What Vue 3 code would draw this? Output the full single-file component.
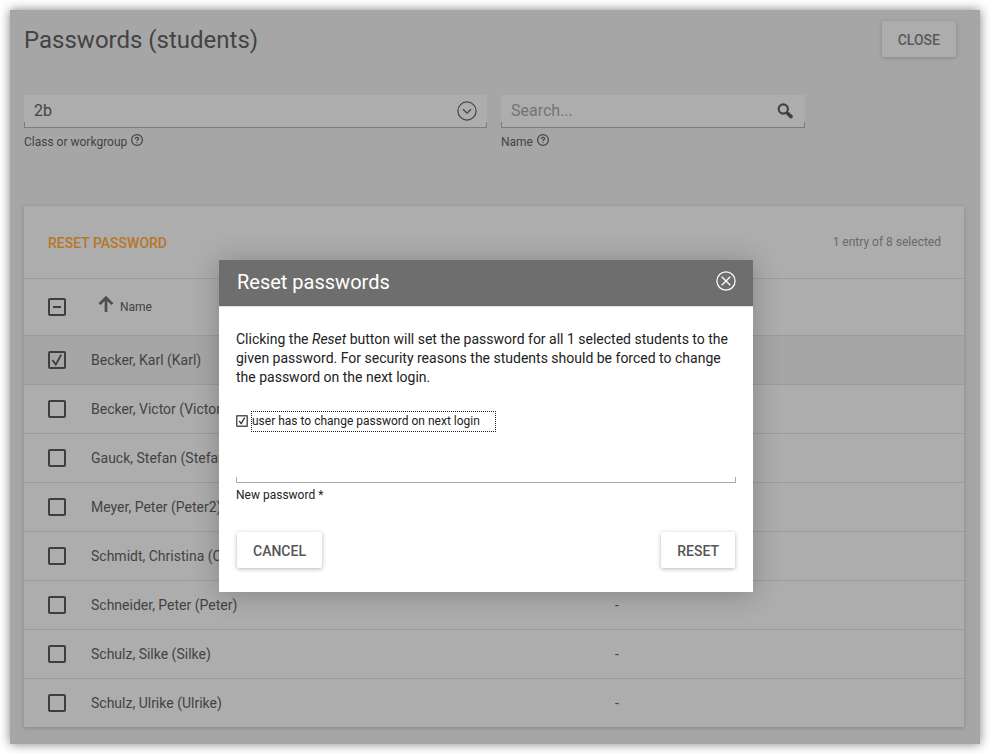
<script setup>
import { ref } from 'vue'

const students = ref([
  { name: 'Becker, Karl (Karl)', selected: true },
  { name: 'Becker, Victor (Victor)', selected: false },
  { name: 'Gauck, Stefan (Stefan)', selected: false },
  { name: 'Meyer, Peter (Peter2)', selected: false },
  { name: 'Schmidt, Christina (Christina)', selected: false },
  { name: 'Schneider, Peter (Peter)', selected: false },
  { name: 'Schulz, Silke (Silke)', selected: false },
  { name: 'Schulz, Ulrike (Ulrike)', selected: false },
])
</script>

<template>
  <div class="window">
    <header class="page-header">
      <h1>Passwords (students)</h1>
      <button class="btn close-btn">CLOSE</button>
    </header>

    <section class="filters">
      <div class="field wide">
        <div class="control">
          <span>2b</span>
          <svg class="chevron" width="20" height="20" viewBox="0 0 20 20" fill="none" stroke="#454545">
            <circle cx="10" cy="10" r="9.1" stroke-width="1.2" />
            <path d="M6 8.2l4 4 4-4" stroke-width="1.3" />
          </svg>
        </div>
        <div class="label">
          <span>Class or workgroup</span>
          <svg width="12" height="12" viewBox="0 0 12 12" fill="none" stroke="#404040">
            <circle cx="6" cy="6" r="5.4" stroke-width="1.2" />
            <path d="M4.4 4.9c0-2.1 3.2-2.1 3.2-.2 0 1.1-1.6 1.2-1.6 2.3M6 8v1.1" stroke-width="1.2" />
          </svg>
        </div>
      </div>
      <div class="field narrow">
        <div class="control">
          <span class="placeholder">Search...</span>
          <svg class="magnifier" width="16" height="16" viewBox="0 0 16 16" fill="none" stroke="#404040">
            <circle cx="6.3" cy="6" r="4.6" stroke-width="2.1" />
            <path d="M9.6 9.3l1.5 1.5" stroke-width="2" />
            <path d="M11.1 10.8l2.9 2.8" stroke-width="3.6" stroke-linecap="round" />
          </svg>
        </div>
        <div class="label">
          <span>Name</span>
          <svg width="12" height="12" viewBox="0 0 12 12" fill="none" stroke="#404040">
            <circle cx="6" cy="6" r="5.4" stroke-width="1.2" />
            <path d="M4.4 4.9c0-2.1 3.2-2.1 3.2-.2 0 1.1-1.6 1.2-1.6 2.3M6 8v1.1" stroke-width="1.2" />
          </svg>
        </div>
      </div>
    </section>

    <section class="grid">
      <div class="toolbar">
        <span class="action">RESET PASSWORD</span>
        <span class="status">1 entry of 8 selected</span>
      </div>
      <div class="grid-head">
        <svg class="check" width="18" height="18" viewBox="0 0 18 18" fill="none" stroke="#3e3e3e">
          <rect x="1" y="1" width="16" height="16" rx="1" stroke-width="2" />
          <path d="M5 9h8" stroke-width="2" />
        </svg>
        <svg class="arrow" width="16" height="17" viewBox="0 0 16 17" fill="none" stroke="#4d4d4d">
          <path d="M8 16V2M1.600 8.100L8 1.700l6.400 6.400" stroke-width="2.700" />
        </svg>
        <span>Name</span>
      </div>
      <div v-for="s in students" :key="s.name" class="row" :class="{ selected: s.selected }">
        <svg class="check" width="18" height="18" viewBox="0 0 18 18" fill="none" stroke="#3e3e3e">
          <rect x="1" y="1" width="16" height="16" rx="1" stroke-width="2" />
          <path v-if="s.selected" d="M4.400 9l3.400 4.600 5.400-10" stroke-width="1.900" />
        </svg>
        <span class="name">{{ s.name }}</span>
        <span class="mail">-</span>
      </div>
    </section>
  </div>

  <div class="dialog" role="dialog">
    <div class="dialog-title">
      <h2>Reset passwords</h2>
      <svg width="20" height="20" viewBox="0 0 20 20" fill="none" stroke="#fff">
        <circle cx="10" cy="10" r="9.100" stroke-width="1.250" />
        <path d="M5.700 5.700l8.600 8.600M14.300 5.700l-8.600 8.600" stroke-width="1.300" />
      </svg>
    </div>
    <div class="dialog-body">
      <p>
        Clicking the <i>Reset</i> button will set the password for all 1 selected students to the
        given password. For security reasons the students should be forced to change the password on
        the next login.
      </p>
      <div class="option">
        <svg width="12" height="12" viewBox="0 0 12 12" fill="none">
          <rect x=".75" y=".75" width="10.500" height="10.500" rx=".5" stroke="#555" stroke-width="1.500" />
          <path d="M3.200 6l2 2.600L8.700 2.600" stroke="#333" stroke-width="1.300" />
        </svg>
        <span class="option-label">user has to change password on next login</span>
      </div>
      <div class="password"></div>
      <div class="password-label">New password *</div>
      <div class="actions">
        <button class="btn">CANCEL</button>
        <button class="btn">RESET</button>
      </div>
    </div>
  </div>
</template>

<style>
body {
  background: #fff;
}
</style>

<style scoped>
.window,
.dialog,
.btn {
  font-family: Roboto, sans-serif;
  box-sizing: border-box;
}
.window {
  width: 970px;
  height: 734px;
  margin: 10px;
  padding: 11px 16px 0 14px;
  background: #a6a6a6;
  box-shadow: 0 0 10px rgba(0, 0, 0, 0.5);
  color: #434343;
  overflow: hidden;
}
.page-header {
  display: flex;
  justify-content: space-between;
  height: 74px;
  padding-right: 8px;
}
h1,
h2,
p {
  margin: 0;
  font-weight: 400;
}
h1 {
  font-size: 24px;
  line-height: 38px;
}
.btn {
  height: 36px;
  padding: 2px 16px 0;
  border: 0;
  border-radius: 2px;
  background: #fff;
  color: #555;
  font-size: 14px;
  font-weight: 500;
  line-height: 34px;
  box-shadow: 0 1px 4px rgba(0, 0, 0, 0.3);
}
.close-btn {
  background: #adadad;
  color: #5a5a5a;
  box-shadow: 0 1px 4px rgba(0, 0, 0, 0.2);
}
.filters {
  display: flex;
  gap: 14px;
  height: 111px;
}
.wide {
  width: 463px;
}
.narrow {
  width: 304px;
}
.control {
  display: flex;
  align-items: center;
  justify-content: space-between;
  box-sizing: border-box;
  height: 33px;
  padding: 0 10px 1px;
  font-size: 16px;
  background:
    linear-gradient(#7d7d7d, #7d7d7d) left bottom / 1px 6px no-repeat,
    linear-gradient(#7d7d7d, #7d7d7d) right bottom / 1px 6px no-repeat,
    linear-gradient(#7d7d7d, #7d7d7d) left bottom / 100% 1px no-repeat,
    #adadad;
}
.control span {
  padding-bottom: 2px;
}
.placeholder {
  color: #747474;
}
.magnifier {
  margin-right: 2px;
}
.label {
  display: flex;
  gap: 4px;
  padding-top: 6px;
  font-size: 12px;
  line-height: 16px;
}
.grid {
  width: 940px;
  background: #adadad;
  box-shadow: 0 1px 4px rgba(0, 0, 0, 0.2);
}
.toolbar {
  display: flex;
  align-items: center;
  justify-content: space-between;
  height: 72px;
  padding: 0 23px 0 24px;
  border-bottom: 1px solid #9b9b9b;
}
.action {
  padding-top: 2px;
  color: #b87628;
  font-size: 14px;
  font-weight: 500;
}
.status {
  color: #696969;
  font-size: 12px;
}
.grid-head {
  display: flex;
  align-items: center;
  height: 56px;
  padding-left: 24px;
  border-bottom: 1px solid #9b9b9b;
  font-size: 12px;
}
.arrow {
  margin: 0 6px 5px 32px;
}
.row {
  display: flex;
  align-items: center;
  height: 48px;
  padding-left: 24px;
  border-bottom: 1px solid #9b9b9b;
  font-size: 14px;
}
.row:last-child {
  border-bottom: 0;
}
.selected {
  background: #a6a6a6;
}
.name {
  width: 549px;
  padding-left: 25px;
  box-sizing: border-box;
}
.dialog {
  position: absolute;
  left: 219px;
  top: 260px;
  width: 534px;
  height: 332px;
  background: #fff;
  color: #222;
  box-shadow: 0 2px 26px rgba(0, 0, 0, 0.24);
}
.dialog-title {
  display: flex;
  align-items: center;
  justify-content: space-between;
  height: 46px;
  padding: 0 17px 0 18px;
  box-sizing: border-box;
  background: #6e6e6e;
  color: #fff;
}
.dialog-title svg {
  margin-bottom: 4px;
}
h2 {
  padding-bottom: 2px;
  font-size: 20px;
  line-height: 44px;
}
.dialog-body {
  padding: 23px 17px 0;
  border-top: 1px solid #e0e0e0;
}
p {
  font-size: 14px;
  line-height: 19px;
}
.option {
  display: flex;
  align-items: center;
  gap: 3px;
  margin-top: 24px;
}
.option svg {
  margin-bottom: 1px;
}
.option-label {
  box-sizing: border-box;
  width: 245px;
  height: 21px;
  border: 1px dotted #222;
  font-size: 12px;
  line-height: 18px;
}
.password {
  height: 51px;
  width: 500px;
  background:
    linear-gradient(#aaa, #aaa) left bottom / 1px 6px no-repeat,
    linear-gradient(#aaa, #aaa) right bottom / 1px 6px no-repeat,
    linear-gradient(#aaa, #aaa) left bottom / 100% 1px no-repeat;
}
.password-label {
  padding-top: 4px;
  font-size: 12px;
  line-height: 16px;
}
.actions {
  display: flex;
  justify-content: space-between;
  padding: 29px 1px 0;
}
</style>
